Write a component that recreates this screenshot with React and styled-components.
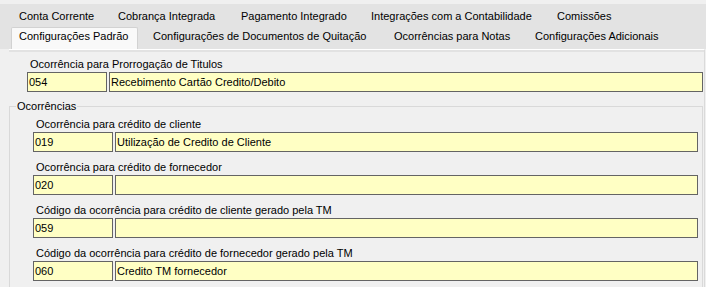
import React from 'react'
import styled, { createGlobalStyle } from 'styled-components'

const GlobalStyle = createGlobalStyle`
    html, body {
        margin: 0;
        padding: 0;
        background: #f0f0f0;
    }
    body {
        font-family: "Liberation Sans", Arial, sans-serif;
        font-size: 11px;
        color: #000;
    }
`;

const backTabs = [
    { label: 'Conta Corrente', w: 99 },
    { label: 'Cobrança Integrada', w: 123 },
    { label: 'Pagamento Integrado', w: 130 },
    { label: 'Integrações com a Contabilidade', w: 186 },
    { label: 'Comissões', w: 80 },
];

const frontTabs = [
    { label: 'Configurações de Documentos de Quitação', w: 241 },
    { label: 'Ocorrências para Notas', w: 141 },
    { label: 'Configurações Adicionais', w: 157 },
];

const ocorrencias = [
    { label: 'Ocorrência para crédito de cliente', code: '019', desc: 'Utilização de Credito de Cliente' },
    { label: 'Ocorrência para crédito de fornecedor', code: '020', desc: '' },
    { label: 'Código da ocorrência para crédito de cliente gerado pela TM', code: '059', desc: '' },
    { label: 'Código da ocorrência para crédito de fornecedor gerado pela TM', code: '060', desc: 'Credito TM fornecedor' },
];

function Field({ label, code, desc }) {
    return (
        <FieldWrapper>
            <FieldLabel>{label}</FieldLabel>
            <InputRow>
                <CodeBox>{code}</CodeBox>
                <DescBox>{desc}</DescBox>
            </InputRow>
        </FieldWrapper>
    );
}

export default function App() {
    return (
        <>
            <GlobalStyle />
            <Window>
                <TabStrip>
                    <TabRow $top>
                        {backTabs.map(t => (
                            <Tab key={t.label} $w={t.w}>{t.label}</Tab>
                        ))}
                    </TabRow>
                    <TabRow>
                        <ActiveTab>Configurações Padrão</ActiveTab>
                        {frontTabs.map(t => (
                            <Tab key={t.label} $w={t.w} $front>{t.label}</Tab>
                        ))}
                    </TabRow>
                </TabStrip>
                <Panel>
                    <TopSection>
                        <Field
                            label="Ocorrência para Prorrogação de Titulos"
                            code="054"
                            desc="Recebimento Cartão Credito/Debito"
                        />
                    </TopSection>
                    <GroupBox>
                        <Legend>Ocorrências</Legend>
                        {ocorrencias.map(o => (
                            <Field key={o.code} {...o} />
                        ))}
                    </GroupBox>
                </Panel>
            </Window>
        </>
    );
}

const Window = styled.div`
    width: 706px;
    height: 287px;
    overflow: hidden;
    background: #f0f0f0;
    padding-top: 4px;
    box-sizing: border-box;
`;

const TabStrip = styled.div`
    background: #e3e3e3;
    display: flex;
    flex-direction: column;
`;

const TabRow = styled.div`
    display: flex;
    align-items: flex-end;
    height: ${p => (p.$top ? '23px' : '22px')};
    padding-left: ${p => (p.$top ? '7px' : '11px')};
`;

const Tab = styled.div`
    width: ${p => p.$w}px;
    flex-shrink: 0;
    box-sizing: border-box;
    padding-left: 12px;
    line-height: 13px;
    height: 100%;
    padding-top: ${p => (p.$front ? '3px' : '6px')};
    white-space: nowrap;
`;

const ActiveTab = styled.div`
    width: 127px;
    height: 22px;
    margin-right: 3px;
    box-sizing: border-box;
    background: #f9f9f9;
    border: 1px solid #d2d2d2;
    border-bottom: none;
    border-radius: 2px 2px 0 0;
    padding: 2px 0 0 7px;
    line-height: 13px;
    white-space: nowrap;
    overflow: hidden;
`;

const Panel = styled.div`
    margin: 0 1px 0 9px;
    border-top: 1px solid #ffffff;
    border-right: 1px solid #dadada;
    box-shadow: inset 0 2px 0 #e2e2e2;
    padding-top: 8px;
    height: 400px;
`;

const TopSection = styled.div`
    padding: 0 1px 0 18px;
`;

const FieldWrapper = styled.div`
    display: flex;
    flex-direction: column;
    & + & {
        margin-top: 9px;
    }
`;

const FieldLabel = styled.div`
    line-height: 13px;
    padding-left: 3px;
    margin-bottom: 1px;
    white-space: nowrap;
`;

const InputRow = styled.div`
    display: flex;
    gap: 2px;
`;

const TextBox = styled.div`
    height: 20px;
    box-sizing: border-box;
    border: 1px solid #646464;
    background: #ffffc4;
    line-height: 18px;
    padding-left: 1px;
    white-space: nowrap;
    overflow: hidden;
`;

const CodeBox = styled(TextBox)`
    width: 80px;
    flex-shrink: 0;
`;

const DescBox = styled(TextBox)`
    flex: 1;
`;

const GroupBox = styled.div`
    position: relative;
    margin: 14px 1px 0 0;
    border: 1px solid #d9d9d9;
    padding: 11px 4px 40px 23px;
`;

const Legend = styled.span`
    position: absolute;
    top: -7px;
    left: 6px;
    padding: 0 1px;
    background: #f0f0f0;
    line-height: 13px;
`;
